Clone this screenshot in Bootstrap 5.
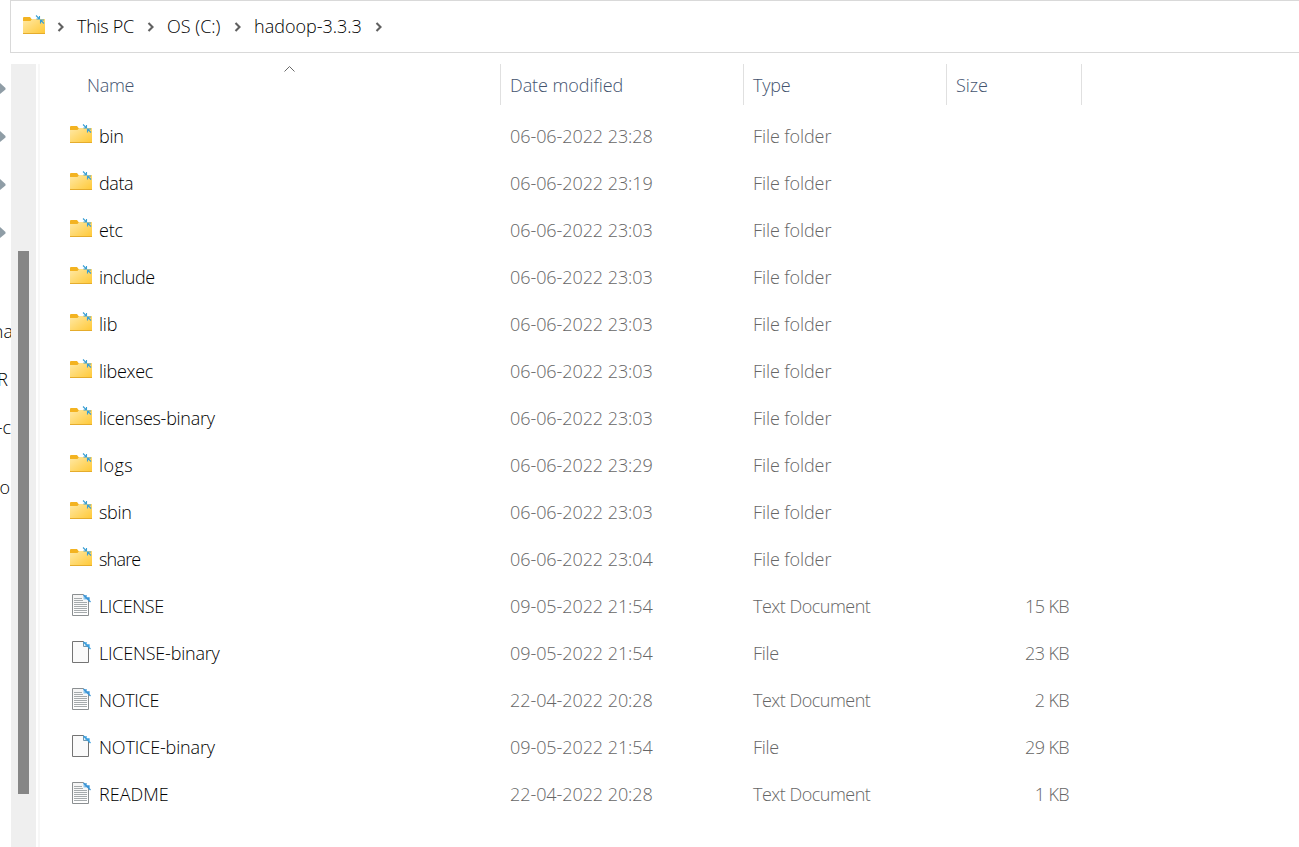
<!DOCTYPE html>
<html lang="en">
<head>
<meta charset="utf-8">
<meta name="viewport" content="width=device-width, initial-scale=1">
<title>hadoop-3.3.3</title>
<link href="https://cdn.jsdelivr.net/npm/bootstrap@5.3.0/dist/css/bootstrap.min.css" rel="stylesheet">
<style>
body{font-family:"Open Sans","Noto Sans",sans-serif;font-size:18px;font-weight:300;line-height:24px;color:#000;background:#fff;height:847px}
svg{display:block;flex:none}
.address{height:53px;margin-left:10px;border:1px solid #d9d9d9;border-right:0;padding-left:11px}
.address .seg{white-space:nowrap;margin-bottom:1px}
.address .place{margin-bottom:3px;margin-right:11px}
.s1{width:70px;margin-left:12px;letter-spacing:-.3px}
.s2{width:67px;margin-left:12px}
.s3{width:121px;margin-left:12px}
.pane{height:783px;margin-top:11px}
.side{width:11px;overflow:hidden}
.pin{height:48px;padding-top:17px}
.clip{height:48px;line-height:48px;justify-content:flex-end;white-space:nowrap}
.clip-na{margin-top:51px;margin-right:-2px}
.clip-r{margin-right:3px}
.clip-o{margin-top:12px;margin-right:1px}
.track{width:25px;background:#efefef;padding:187px 7px 0}
.thumb{height:543px;background:#868686}
.edge{width:2px;margin-left:2px;background:#f7f7f7}
.files{width:1042px}
.heads{height:41px;color:#44546f;line-height:42px;margin-bottom:8px}
.c-name{width:460px;padding-left:29px}
.c-date{width:243px;padding-left:10px;letter-spacing:-.07px}
.c-type{width:203px;padding-left:10px}
.c-size{width:136px;padding-left:9px;padding-right:13px;letter-spacing:-.6px}
.heads>div{border-right:1px solid #e0e0e0}
.heads .c-name{width:461px;padding-left:47px;letter-spacing:-.3px}
.heads .c-date{padding-left:9px}
.heads .c-type{padding-left:9px;letter-spacing:-.2px}
.heads .c-size{width:135px;letter-spacing:-.1px}
.sorter{left:244px;top:1px}
.entry{height:47px;line-height:47px;color:#666;white-space:nowrap}
.entry .c-name{color:#000}
.entry .c-name svg{margin-right:6px;margin-top:-5px}
.entry .c-name svg.sheet{margin-top:-3px}
</style>
</head>
<body class="d-flex flex-column overflow-hidden">
<svg width="0" height="0" class="position-absolute" aria-hidden="true">
<defs>
<linearGradient id="gold" x2="1" y2="1"><stop stop-color="#ffe9a6"/><stop offset="1" stop-color="#ffc835"/></linearGradient>
<linearGradient id="paper" x2="0" y2="1"><stop stop-color="#f4f4f4"/><stop offset="1" stop-color="#fff"/></linearGradient>
<symbol id="folder" viewBox="0 0 24 22">
<path d="M1 4q0-1 1-1h6l1.500 2H22q1 0 1 1v3H1z" fill="#f3b321"/>
<path d="M1 7h7.500L10 5h13v14.500q0 .5-.5 .5h-21Q1 20 1 19.500z" fill="url(#gold)"/>
<path d="M1 19.500h22" stroke="#e5ac2c"/>
<path d="M14 1.500l3.500 3.500M17.500 2v3h-3M22 9.500L18.500 6M18.500 9.500V6H22" fill="none" stroke="#3a9fd4" stroke-width="1.100"/>
</symbol>
<symbol id="blank" viewBox="0 0 24 24">
<path d="M3.500 1.500h11l5 5v16h-16z" fill="#fafafa" stroke="#747474"/>
<path d="M14.500 1.500v5h5z" fill="#e8f3fa" stroke="#7297ae"/>
<path d="M14.500 2l7 7M17 2v3h3v3" fill="none" stroke="#3a9fdf" stroke-width="1.300"/>
</symbol>
<symbol id="doc" viewBox="0 0 24 24">
<path d="M3.500 1.500h11l5 5v16h-16z" fill="url(#paper)" stroke="#8b8f91"/>
<path d="M5 5.500h8M5 7.500h9M5 9.500h13M5 11.500h13M5 13.500h13M5 15.500h13M5 17.500h13M5 19.500h13" stroke="#a5aaac"/>
<path d="M14.500 1.500v5h5z" fill="#8fc7ec"/>
<path d="M14.500 2l7 7M17 2v3h3v3" fill="none" stroke="#3a94d6" stroke-width="1.300"/>
</symbol>
<symbol id="chev" viewBox="0 0 8 10"><path d="M1.500 1l4 4-4 4" fill="none" stroke="#606060" stroke-width="2.100"/></symbol>
<symbol id="pinhead" viewBox="0 0 6 14"><path d="M0 2l5.500 5v1.500L0 13z" fill="#8f9da6"/></symbol>
</defs>
</svg>

<nav class="address d-flex align-items-center" aria-label="Address">
<svg class="place" width="24" height="22"><use href="#folder"/></svg>
<svg width="8" height="10"><use href="#chev"/></svg>
<span class="seg s1">This PC</span>
<svg width="8" height="10"><use href="#chev"/></svg>
<span class="seg s2">OS (C:)</span>
<svg width="8" height="10"><use href="#chev"/></svg>
<span class="seg s3">hadoop-3.3.3</span>
<svg width="8" height="10"><use href="#chev"/></svg>
</nav>

<main class="pane d-flex">
<aside class="side">
<div class="pin"><svg width="6" height="14"><use href="#pinhead"/></svg></div>
<div class="pin"><svg width="6" height="14"><use href="#pinhead"/></svg></div>
<div class="pin"><svg width="6" height="14"><use href="#pinhead"/></svg></div>
<div class="pin"><svg width="6" height="14"><use href="#pinhead"/></svg></div>
<div class="clip clip-na d-flex">na</div>
<div class="clip clip-r d-flex">R</div>
<div class="clip d-flex">-c</div>
<div class="clip clip-o d-flex">o</div>
</aside>
<div class="track"><div class="thumb"></div></div>
<div class="edge"></div>
<section class="files">
<header class="heads d-flex position-relative">
<svg class="sorter position-absolute" width="11" height="7"><path d="M.5 6.500l5-5 5 5" fill="none" stroke="#686868"/></svg>
<div class="c-name">Name</div><div class="c-date">Date modified</div><div class="c-type">Type</div><div class="c-size">Size</div>
</header>
<div id="rows"></div>
</section>
</main>
<script>
// icon, name, name tracking in px, modified, type, size
const files = [
  ["folder","bin",-.3,"06-06-2022 23:28","File folder",""],
  ["folder","data",-.4,"06-06-2022 23:19","File folder",""],
  ["folder","etc",-.2,"06-06-2022 23:03","File folder",""],
  ["folder","include",-.4,"06-06-2022 23:03","File folder",""],
  ["folder","lib",-.2,"06-06-2022 23:03","File folder",""],
  ["folder","libexec",-.3,"06-06-2022 23:03","File folder",""],
  ["folder","licenses-binary",-.28,"06-06-2022 23:03","File folder",""],
  ["folder","logs",.4,"06-06-2022 23:29","File folder",""],
  ["folder","sbin",-.3,"06-06-2022 23:03","File folder",""],
  ["folder","share",-.8,"06-06-2022 23:04","File folder",""],
  ["doc","LICENSE",-.4,"09-05-2022 21:54","Text Document","15 KB"],
  ["blank","LICENSE-binary",-.22,"09-05-2022 21:54","File","23 KB"],
  ["doc","NOTICE",-.3,"22-04-2022 20:28","Text Document","2 KB"],
  ["blank","NOTICE-binary",-.15,"09-05-2022 21:54","File","29 KB"],
  ["doc","README",0,"22-04-2022 20:28","Text Document","1 KB"]
];
const typeTracking = {"File folder":-.1,"File":-.3,"Text Document":-.5};
document.getElementById("rows").innerHTML = files.map(([icon,name,track,date,type,size]) =>
  `<div class="entry d-flex"><div class="c-name d-flex align-items-center"><svg class="${icon==="folder"?"":"sheet"}" width="24" height="${icon==="folder"?22:24}"><use href="#${icon}"/></svg><span style="letter-spacing:${track}px">${name}</span></div><div class="c-date">${date}</div><div class="c-type" style="letter-spacing:${typeTracking[type]}px">${type}</div><div class="c-size text-end">${size}</div></div>`).join("");
</script>
<script src="https://cdn.jsdelivr.net/npm/bootstrap@5.3.0/dist/js/bootstrap.bundle.min.js"></script>
</body>
</html>
